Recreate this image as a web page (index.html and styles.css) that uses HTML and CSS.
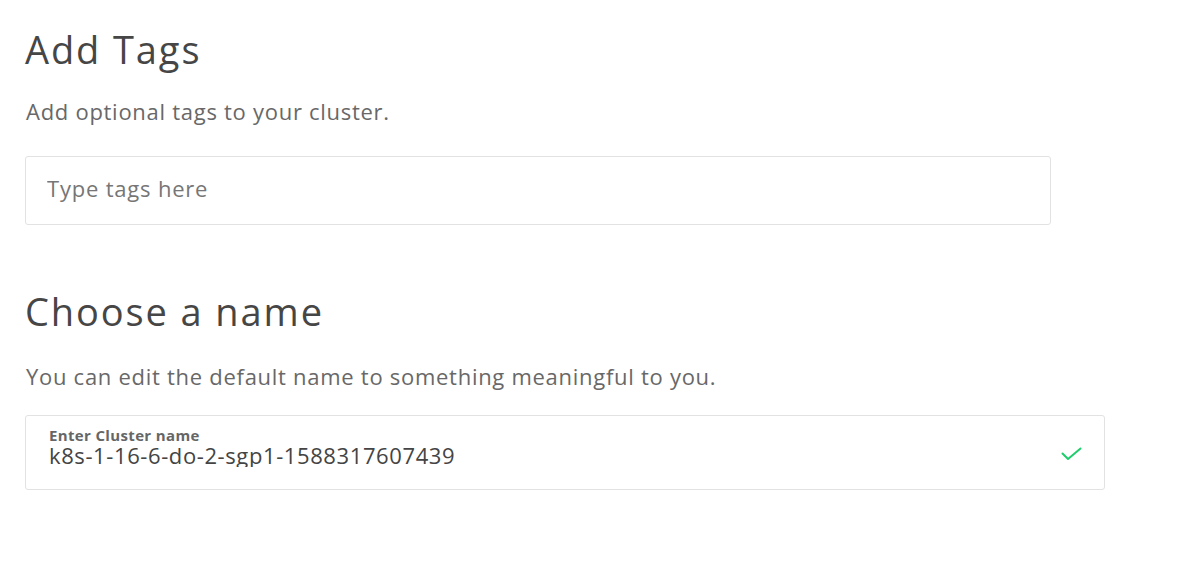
FILE: index.html
```html
<!DOCTYPE html>
<html lang="en">
<head>
    <meta charset="UTF-8">
    <meta name="viewport" content="width=device-width, initial-scale=1.0">
    <title>Create cluster</title>
    <link rel="stylesheet" href="styles.css">
</head>
<body>
    <main class="page">
        <section class="section section-tags">
            <h2 class="section-title">Add Tags</h2>
            <p class="section-desc">Add optional tags to your cluster.</p>
            <div class="tags-box">
                <input class="tags-input" type="text" placeholder="Type tags here">
            </div>
        </section>

        <section class="section section-name">
            <h2 class="section-title">Choose a name</h2>
            <p class="section-desc">You can edit the default name to something meaningful to you.</p>
            <div class="name-box">
                <div class="name-field">
                    <label class="name-label" for="cluster-name">Enter Cluster name</label>
                    <input class="name-input" id="cluster-name" type="text" value="k8s-1-16-6-do-2-sgp1-1588317607439">
                </div>
                <!-- valid name -->
                <svg class="check" width="21" height="14" viewBox="0 0 21 14">
                    <path d="M1.5 6.5 L7 12 L19.5 1.5" fill="none" stroke="#1ecd6c" stroke-width="2" stroke-linecap="round" stroke-linejoin="round"/>
                </svg>
            </div>
        </section>
    </main>
</body>
</html>
```

FILE: styles.css
```css
body {
    margin: 0;
    padding: 0;
    background-color: #fff;
    font-family: "Open Sans", Arial, sans-serif;
    color: #444;
}

.page {
    padding: 26px 25px 0 25px;
}

.section-name {
    margin-top: 63px;
}

.section-title {
    margin: 0;
    font-size: 38px;
    font-weight: 400;
    line-height: 46px;
    letter-spacing: 1.9px;
    color: #464646;
}

.section-desc {
    margin: 25px 0 31px 1px;
    font-size: 22px;
    line-height: 28px;
    letter-spacing: 0.72px;
    color: #686868;
}

.section-name .section-desc {
    margin: 28px 0 25px 1px;
}

.tags-box {
    width: 1024px;
    height: 67px;
    box-sizing: content-box;
    border: 1px solid #e2e2e2;
    border-radius: 3px;
}

.tags-input {
    display: block;
    box-sizing: border-box;
    border: none;
    outline: none;
    width: 100%;
    height: 30px;
    margin-top: 16px;
    padding: 0 21px;
    font-family: inherit;
    font-size: 22px;
    line-height: 30px;
    letter-spacing: 0.8px;
    color: #444;
    background: transparent;
}

.tags-input::placeholder {
    color: #767676;
}

.name-box {
    width: 1033px;
    height: 73px;
    border: 1px solid #e2e2e2;
    border-radius: 3px;
    display: flex;
    align-items: center;
    padding: 0 22px 0 23px;
}

.name-field {
    display: flex;
    flex-direction: column;
    flex: 1;
    align-self: flex-start;
    padding-top: 12px;
}

.name-label {
    font-size: 15px;
    font-weight: 700;
    line-height: 15px;
    letter-spacing: 0.35px;
    color: #666;
}

.name-input {
    border: none;
    outline: none;
    padding: 0;
    margin: 0;
    height: 24px;
    font-family: inherit;
    font-size: 22px;
    line-height: 24px;
    letter-spacing: 0.6px;
    color: #444;
    background: transparent;
}

.check {
    display: block;
    margin-top: 2px;
}
```
